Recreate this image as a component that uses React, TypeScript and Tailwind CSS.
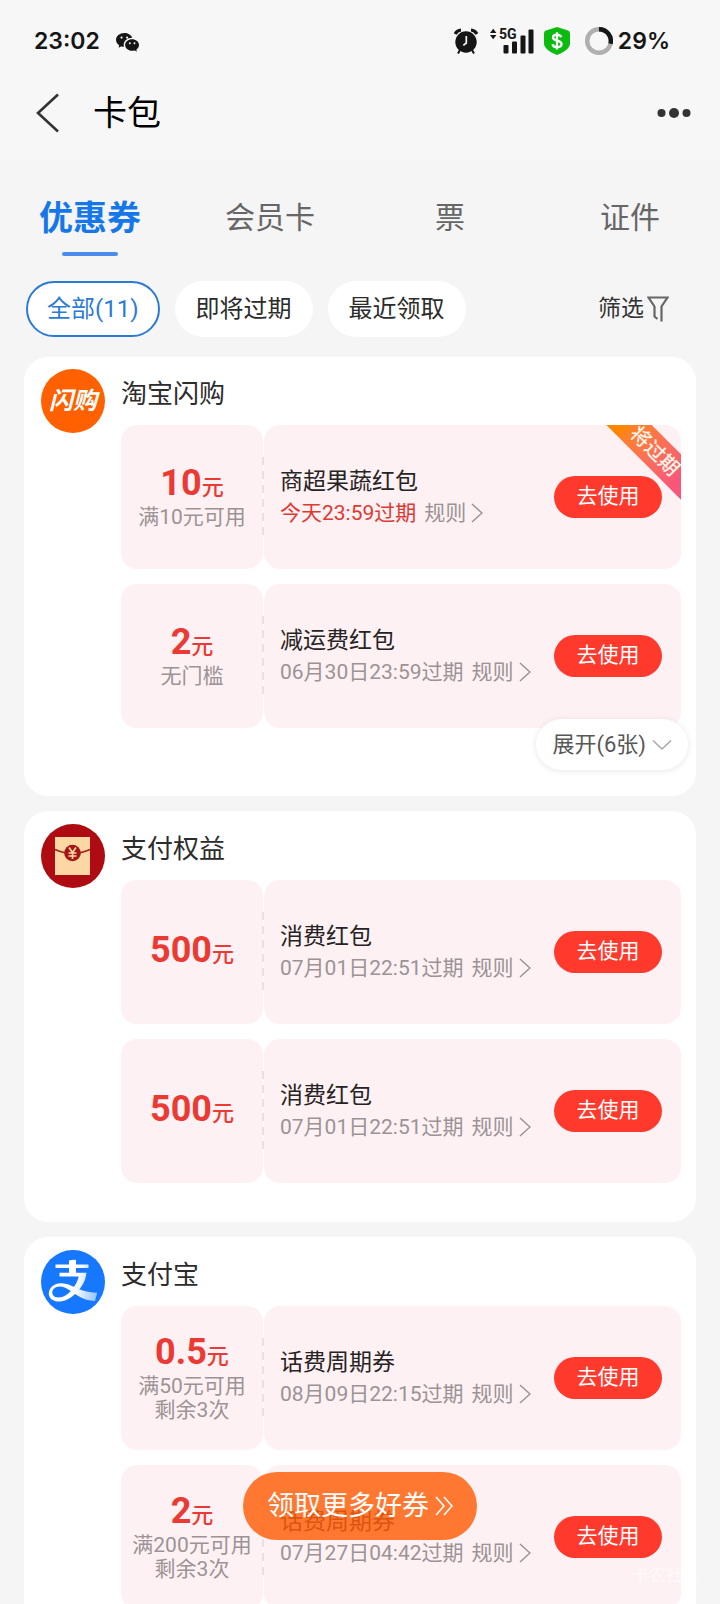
import { useState } from "react";
import { BsWechat } from "react-icons/bs";

type Coupon = {
  amount: string;
  notes: string[];
  title: string;
  expire: string;
  urgent?: boolean;
};

type Group = {
  name: string;
  logo: "shangou" | "envelope" | "alipay";
  coupons: Coupon[];
  more?: number;
};

const tabs = ["优惠券", "会员卡", "票", "证件"];
const filters = ["全部(11)", "即将过期", "最近领取"];

const groups: Group[] = [
  {
    name: "淘宝闪购",
    logo: "shangou",
    more: 6,
    coupons: [
      { amount: "10", notes: ["满10元可用"], title: "商超果蔬红包", expire: "今天23:59过期", urgent: true },
      { amount: "2", notes: ["无门槛"], title: "减运费红包", expire: "06月30日23:59过期" },
    ],
  },
  {
    name: "支付权益",
    logo: "envelope",
    coupons: [
      { amount: "500", notes: [], title: "消费红包", expire: "07月01日22:51过期" },
      { amount: "500", notes: [], title: "消费红包", expire: "07月01日22:51过期" },
    ],
  },
  {
    name: "支付宝",
    logo: "alipay",
    coupons: [
      { amount: "0.5", notes: ["满50元可用", "剩余3次"], title: "话费周期券", expire: "08月09日22:15过期" },
      { amount: "2", notes: ["满200元可用", "剩余3次"], title: "话费周期券", expire: "07月27日04:42过期" },
    ],
  },
];

const StatusBar = () => (
  <div className="flex h-[82px] items-center justify-between pl-[34px] pr-[50px] font-['Inter','Noto_Sans_CJK_SC',sans-serif] text-[23px] font-semibold text-[#161616]">
    <div className="flex items-center gap-4">
      <span>23:02</span>
      <BsWechat className="size-[23px]" />
    </div>
    <div className="flex items-center">
      {/* Alarm */}
      <svg className="h-7 w-6" viewBox="0 0 24 28" fill="none">
        <path d="M1.200 7A7 7 0 0 1 7 3M22.800 7A7 7 0 0 0 17 3" stroke="#161616" strokeWidth="3.200" />
        <path d="M6 23l-2 3.500M18 23l2 3.500" stroke="#161616" strokeWidth="2" />
        <circle cx="12" cy="15" r="10.700" fill="#161616" />
        <path d="M12.300 9v7l-3 2.400" stroke="#f7f7f7" strokeWidth="1.700" />
      </svg>
      {/* Signal */}
      <svg className="ml-3 h-7 w-[44px]" viewBox="0 0 44 28" fill="#161616">
        <path d="M0 6l3.200-4.200L6.400 6zM0 8h6.400l-3.200 4.200z" />
        <text x="9" y="12" fontSize="14" fontWeight="700" fontFamily="Roboto, sans-serif">5G</text>
        <rect x="13.500" y="18" width="5" height="8.500" rx="1" />
        <rect x="22" y="14.500" width="5" height="12" rx="1" />
        <rect x="30.500" y="8.500" width="5" height="18" rx="1" />
        <rect x="38.500" y="2.500" width="5" height="24" rx="1" />
      </svg>
      {/* Payment protection */}
      <svg className="ml-[10px] h-7 w-[26px]" viewBox="0 0 26 28" fill="none">
        <path d="M13 0l11 3.600q2 .7 2 2.600v10c0 5.500-7 9.500-13 11.800C7 25.700 0 21.700 0 16.200v-10q0-1.900 2-2.600z" fill="#0bbb10" />
        <path d="M17.200 10.300c-.4-1.800-2-2.700-4.200-2.700-2.400 0-4 1.200-4 3 0 4.200 8.500 2 8.500 6.400 0 1.900-1.800 3.200-4.400 3.200-2.500 0-4.200-1-4.600-3M13 5.200v17.300" stroke="#fff" strokeWidth="2.300" />
      </svg>
      {/* Battery */}
      <svg className="ml-[15px] size-7" viewBox="0 0 28 28" fill="none" strokeWidth="4.400">
        <circle cx="14" cy="14" r="11.800" stroke="#afafaf" />
        <path d="M14 2.200a11.800 11.800 0 0 1 11.500 14.600" stroke="#161616" />
      </svg>
      <span className="ml-[5px]">29%</span>
    </div>
  </div>
);

const Logo = ({ kind }: { kind: Group["logo"] }) => {
  if (kind === "shangou") {
    return (
      <div className="flex size-16 shrink-0 items-center justify-center rounded-full bg-[#ff6000] text-2xl font-bold italic text-white">
        闪购
      </div>
    );
  }
  if (kind === "envelope") {
    return (
      <svg className="size-16 shrink-0" viewBox="0 0 64 64" fill="none">
        <circle cx="32" cy="32" r="32" fill="#ae0b12" />
        <path d="M14 13h35v38H14z" fill="#fbd7a4" />
        <path d="M14 25.500q9 4 17.500 4t17.500-4" stroke="#9a2418" strokeWidth="1.700" />
        <circle cx="31.500" cy="29" r="8.300" fill="#a51516" />
        <path d="M28 23.500l3.500 5 3.500-5M31.500 28.500v6.500M27.500 29h8M27.500 32h8" stroke="#fbd7a4" strokeWidth="1.700" />
      </svg>
    );
  }
  return (
    <svg className="size-16 shrink-0" viewBox="0 0 64 64" fill="none">
      <defs>
        <linearGradient id="swash" x1="10" y1="36" x2="57" y2="46" gradientUnits="userSpaceOnUse">
          <stop offset="0.500" stopColor="#fff" />
          <stop offset="1" stopColor="#8fc0ff" />
        </linearGradient>
      </defs>
      <circle cx="32" cy="32" r="32" fill="#1677ff" />
      <path d="M28 10.500q3.500-1.200 7-.5v4.500h12.500V18H35v4.800h10.500q-1.200 12-11.500 21.200C28.500 49 22.500 52 16.500 51.500 11 51 7.500 47.500 7.800 43c.4-5.500 5.700-9.500 11.700-9.700 8-.2 14.500 4.700 21.500 7 5 1.700 10 2.200 15.200 2.500L54 51c-6.500-.1-12-2.200-18-5.800-6-3.600-11.500-8.700-17.500-8.600-4 .1-7 2.600-7.200 5.600-.2 3 2.200 5.300 5.700 5.300 5.500 0 10.500-3.500 14.500-8.500 3-3.700 5.300-8 6.200-12.500H18.500v-3.700H28V18H14.500v-3.500H28z" fill="url(#swash)" />
    </svg>
  );
};

const CouponRow = ({ coupon }: { coupon: Coupon }) => (
  <li className="relative flex h-36 gap-px">
    <div className="flex w-[142px] shrink-0 flex-col items-center justify-center rounded-2xl bg-[#fef1f3] pb-1">
      <p className="whitespace-nowrap text-4xl/[44px] font-bold text-[#ea3a33]">
        {coupon.amount}
        <span className="text-[22px]/none font-medium">元</span>
      </p>
      {coupon.notes.map((note) => (
        <p key={note} className="whitespace-nowrap text-[21px]/6 text-[#9b9395]">{note}</p>
      ))}
    </div>
    {/* Tear line */}
    <div className="absolute left-[141px] top-8 h-20 w-0.5 bg-[repeating-linear-gradient(to_bottom,#ecdfe1_0_8px,transparent_8px_14px)]" />
    <div className="relative flex min-w-0 flex-1 items-center justify-between overflow-hidden rounded-2xl bg-[#fef1f3] pl-4 pr-[19px]">
      {coupon.urgent && (
        <div className="absolute -right-[30px] top-[10px] w-28 rotate-45 bg-linear-to-r from-[#ff8500] from-15% to-[#f7557a] to-85% text-center text-xl/8 font-medium text-[#fff3e6]">
          将过期
        </div>
      )}
      <div className="whitespace-nowrap">
        <h3 className="text-[23px]/8 text-[#262324]">{coupon.title}</h3>
        <div className="flex items-center gap-2 text-[21px]/[30px] text-[#9b9395]">
          <span className={coupon.urgent ? "text-[#dc3a33]" : ""}>{coupon.expire}</span>
          <a href="#rules" className="flex items-center gap-[5px]">
            规则
            <svg className="h-5 w-3" viewBox="0 0 12 20" fill="none" stroke="currentColor" strokeWidth="1.500">
              <path d="M1 1l10 9-10 9" />
            </svg>
          </a>
        </div>
      </div>
      <button className="relative h-[42px] w-[108px] shrink-0 rounded-full bg-[#ff3a2d] text-[21px] text-white">
        去使用
      </button>
    </div>
  </li>
);

const GroupCard = ({ group }: { group: Group }) => (
  <section className={`relative flex gap-4 rounded-3xl bg-white pl-[17px] pr-[15px] ${group.more ? "pb-[68px] pt-3" : "pb-[39px] pt-[13px]"}`}>
    <Logo kind={group.logo} />
    <div className="min-w-0 flex-1">
      <h2 className="h-14 text-[26px]/[50px] text-[#2c2c2c]">{group.name}</h2>
      <ul className="flex flex-col gap-[15px]">
        {group.coupons.map((coupon, i) => (
          <CouponRow key={i} coupon={coupon} />
        ))}
      </ul>
    </div>
    {group.more && (
      <button className="absolute bottom-[26px] right-2 flex h-[51px] items-center gap-[6px] whitespace-nowrap rounded-full bg-white px-4 text-[22px] text-[#575757] shadow-[0_1px_6px_rgba(0,0,0,0.1)]">
        展开({group.more}张)
        <svg className="h-3 w-5" viewBox="0 0 20 12" fill="none" stroke="#a8a8a8" strokeWidth="1.500">
          <path d="M1 1.500l9 8.500 9-8.500" />
        </svg>
      </button>
    )}
  </section>
);

const App = () => {
  const [tab, setTab] = useState(0);
  const [filter, setFilter] = useState(0);

  return (
    <div className="relative h-screen overflow-hidden bg-[#f5f5f5] font-['Roboto','Noto_Sans_CJK_SC',sans-serif]">
      <header className="bg-[#f7f7f7] pb-4">
        <StatusBar />
        <div className="flex h-[62px] items-center pl-9 pr-[29px]">
          <button aria-label="返回">
            <svg className="h-10 w-6" viewBox="0 0 24 40" fill="none" stroke="#333" strokeWidth="2.600">
              <path d="M22 1.500L2 20l20 18.500" />
            </svg>
          </button>
          <h1 className="ml-[33px] flex-1 text-[34px] text-black">卡包</h1>
          <button aria-label="更多">
            <svg className="h-3 w-[34px]" viewBox="0 0 34 12" fill="#333">
              <circle cx="4.500" cy="6" r="4" />
              <circle cx="17" cy="6" r="5" />
              <circle cx="29.500" cy="6" r="4" />
            </svg>
          </button>
        </div>
      </header>

      <nav className="grid grid-cols-4 pt-[37px]">
        {tabs.map((name, i) => (
          <button key={name} onClick={() => setTab(i)} className="flex flex-col items-center gap-[13px]">
            <span className={`leading-[42px] ${tab === i ? "text-[34px] font-bold text-[#1677e8]" : "text-3xl text-[#666]"}`}>
              {name}
            </span>
            {tab === i && <span className="h-1 w-14 rounded-sm bg-[#4a8ceb]" />}
          </button>
        ))}
      </nav>

      <div className="mt-[25px] flex items-center gap-[15px] pl-[26px] pr-[51px]">
        {filters.map((name, i) => (
          <button
            key={name}
            onClick={() => setFilter(i)}
            className={`h-14 whitespace-nowrap rounded-full bg-white text-2xl ${filter === i ? "border-2 border-[#2b7bd6] px-[19px] text-[#2b7bd6]" : "px-[21px] text-[#2c2c2c]"}`}
          >
            {name}
          </button>
        ))}
        <button className="ml-auto flex items-center gap-[3px] whitespace-nowrap text-[23px] text-[#333]">
          筛选
          <svg className="h-[26px] w-[22px]" viewBox="0 0 22 26" fill="none" stroke="#666" strokeWidth="2.200">
            <path d="M14.500 25.500V10.500L20.500 1.500H1.500l6 9v10l3 2.500" />
          </svg>
        </button>
      </div>

      <main className="mt-5 flex flex-col gap-[15px] px-6">
        {groups.map((group) => (
          <GroupCard key={group.name} group={group} />
        ))}
      </main>

      {/* Floating call to action */}
      <button className="absolute bottom-16 left-1/2 flex h-[68px] -translate-x-1/2 items-center gap-[6px] whitespace-nowrap rounded-full bg-[#ff5f0a]/83 px-6 text-[27px] text-white">
        领取更多好券
        <svg className="h-5 w-[18px]" viewBox="0 0 18 20" fill="none" stroke="currentColor" strokeWidth="1.600">
          <path d="M1 1l8 9-8 9M9 1l8 9-8 9" />
        </svg>
      </button>
      <span className="absolute bottom-4 right-5 text-[17px] text-white/60">卡农社区</span>
    </div>
  );
};

export default App;
